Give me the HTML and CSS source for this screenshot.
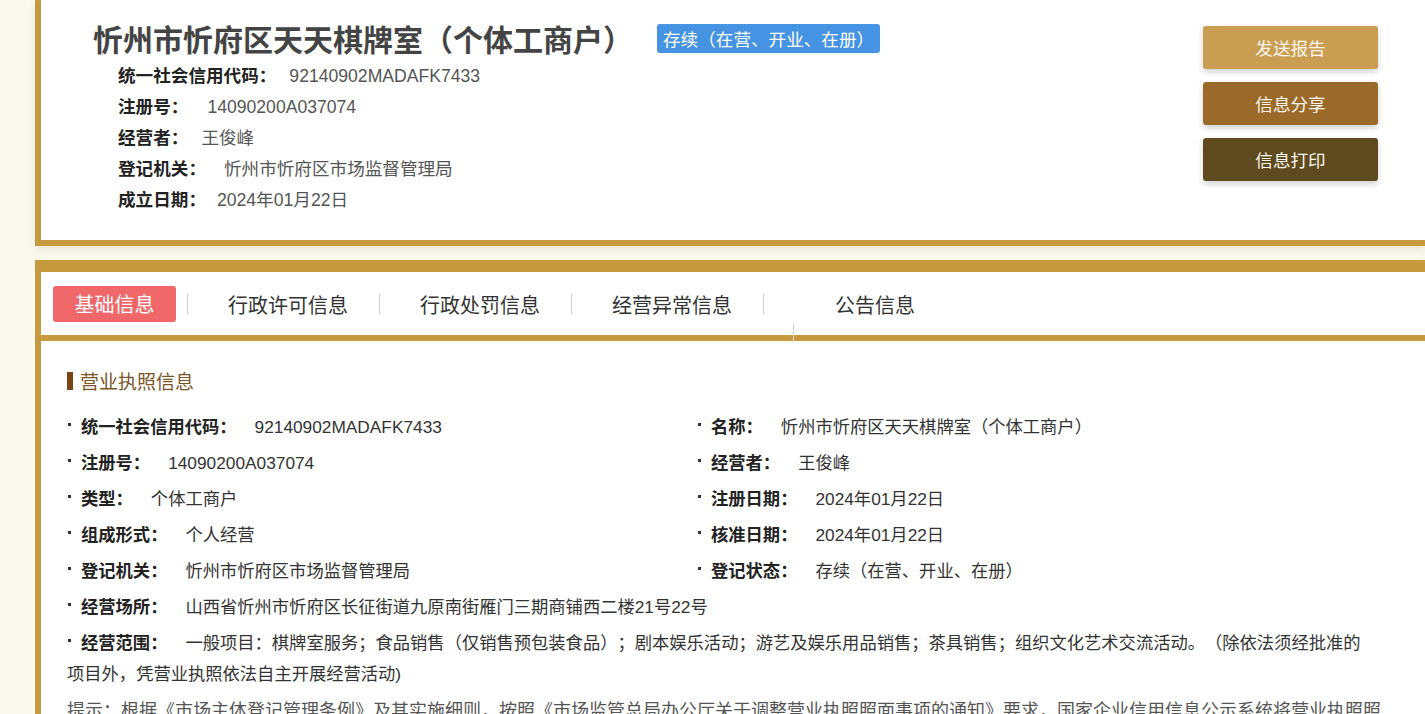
FILE: index.html
```html
<!DOCTYPE html>
<html lang="zh-CN">
<head>
<meta charset="utf-8">
<title>忻州市忻府区天天棋牌室（个体工商户）</title>
<link rel="stylesheet" href="styles.css">
</head>
<body>
<div class="page">
  <section class="head-card">
    <div class="head-main">
      <div class="title-row">
        <h1 class="title">忻州市忻府区天天棋牌室（个体工商户）</h1>
        <span class="status">存续（在营、开业、在册）</span>
      </div>
      <ul class="head-info">
        <li><span class="k">统一社会信用代码：</span><span class="v v-code">92140902MADAFK7433</span></li>
        <li><span class="k">注册号：</span><span class="v v-reg">14090200A037074</span></li>
        <li><span class="k">经营者：</span><span class="v v-op">王俊峰</span></li>
        <li><span class="k">登记机关：</span><span class="v v-org">忻州市忻府区市场监督管理局</span></li>
        <li><span class="k">成立日期：</span><span class="v v-date">2024年01月22日</span></li>
      </ul>
    </div>
    <div class="actions">
      <button class="btn btn-report">发送报告</button>
      <button class="btn btn-share">信息分享</button>
      <button class="btn btn-print">信息打印</button>
    </div>
  </section>

  <section class="detail-card">
    <nav class="tabs">
      <span class="tab tab-active">基础信息</span>
      <span class="tab">行政许可信息</span>
      <span class="tab">行政处罚信息</span>
      <span class="tab">经营异常信息</span>
      <span class="tab tab-last">公告信息</span>
    </nav>
    <div class="detail-body">
      <h2 class="sec-title">营业执照信息</h2>
      <div class="grid">
        <div class="item"><span class="k">统一社会信用代码：</span><span class="v">92140902MADAFK7433</span></div>
        <div class="item"><span class="k">名称：</span><span class="v">忻州市忻府区天天棋牌室（个体工商户）</span></div>
        <div class="item"><span class="k">注册号：</span><span class="v">14090200A037074</span></div>
        <div class="item"><span class="k">经营者：</span><span class="v">王俊峰</span></div>
        <div class="item"><span class="k">类型：</span><span class="v">个体工商户</span></div>
        <div class="item"><span class="k">注册日期：</span><span class="v">2024年01月22日</span></div>
        <div class="item"><span class="k">组成形式：</span><span class="v">个人经营</span></div>
        <div class="item"><span class="k">核准日期：</span><span class="v">2024年01月22日</span></div>
        <div class="item"><span class="k">登记机关：</span><span class="v">忻州市忻府区市场监督管理局</span></div>
        <div class="item"><span class="k">登记状态：</span><span class="v">存续（在营、开业、在册）</span></div>
        <div class="item item-full"><span class="k">经营场所：</span><span class="v">山西省忻州市忻府区长征街道九原南街雁门三期商铺西二楼21号22号</span></div>
        <div class="item item-full item-wrap"><span class="k">经营范围：</span><span class="v">一般项目：棋牌室服务；食品销售（仅销售预包装食品）；剧本娱乐活动；游艺及娱乐用品销售；茶具销售；组织文化艺术交流活动。（除依法须经批准的项目外，凭营业执照依法自主开展经营活动)</span></div>
      </div>
      <p class="tip">提示：根据《市场主体登记管理条例》及其实施细则，按照《市场监管总局办公厅关于调整营业执照照面事项的通知》要求，国家企业信用信息公示系统将营业执照照面公示信息中的“类型”调整为“市场主体类型”，相关信息以登记机关公示为准。</p>
    </div>
  </section>
</div>
</body>
</html>
```

FILE: styles.css
```css
* { box-sizing: border-box; }

html, body {
  margin: 0;
  padding: 0;
  background: #fbf8ee;
  font-family: "Liberation Sans", "Noto Sans CJK SC", "Microsoft YaHei", sans-serif;
  color: #333;
  overflow: hidden;
  text-spacing-trim: space-all;
}

.page {
  padding-left: 35px;
}

/* ---------- head card ---------- */
.head-card {
  display: flex;
  background: #fff;
  border-left: 6px solid #c89a3f;
  border-bottom: 6px solid #c89a3f;
  box-shadow: 0 4px 8px rgba(0, 0, 0, 0.08);
  padding: 18px 47px 24px 52px;
}

.head-main {
  flex: 1;
}

.title-row {
  display: flex;
  align-items: flex-start;
}

.title {
  margin: 0;
  font-family: "Noto Sans CJK SC", sans-serif;
  font-size: 30px;
  line-height: 40px;
  font-weight: 700;
  color: #444;
}

.status {
  margin-top: 6px;
  margin-left: 24px;
  background: #4593e2;
  color: #fff;
  font-family: "Noto Sans CJK SC", sans-serif;
  font-size: 17.6px;
  line-height: 29px;
  height: 29px;
  padding: 0 6px;
  border-radius: 3px;
}

.head-info {
  list-style: none;
  margin: 3px 0 0;
  padding: 0 0 0 25px;
}

.head-info li {
  display: flex;
  font-size: 17.6px;
  line-height: 31px;
}

.head-info .k {
  font-weight: 700;
  color: #222;
}

.head-info .v {
  color: #555;
}

.head-info .v-code { margin-left: 13px; }
.head-info .v-reg { margin-left: 19px; }
.head-info .v-op { margin-left: 13px; }
.head-info .v-org { margin-left: 18px; }
.head-info .v-date { margin-left: 11px; }

.actions {
  display: flex;
  flex-direction: column;
  gap: 13px;
  padding-top: 8px;
}

.btn {
  width: 175px;
  height: 43px;
  border: 0;
  border-radius: 3px;
  color: #fff8ea;
  font-family: "Noto Sans CJK SC", sans-serif;
  font-size: 17.6px;
  box-shadow: 0 3px 6px rgba(0, 0, 0, 0.18);
  cursor: pointer;
}

.btn-report { background: #c99d52; }
.btn-share { background: #9a6a2a; }
.btn-print { background: #5e4a1f; }

/* ---------- detail card ---------- */
.detail-card {
  margin-top: 14px;
  background: #fff;
  border-left: 6px solid #c89a3f;
  border-top: 12px solid #c89a3f;
}

.tabs {
  display: flex;
  align-items: stretch;
  height: 69px;
  padding-left: 12px;
  border-bottom: 6px solid #c89a3f;
}

.tab {
  position: relative;
  display: flex;
  align-items: center;
  font-family: "Noto Sans CJK SC", sans-serif;
  font-size: 20px;
  color: #333;
  padding: 1px 31px 0 41px;
}

.tab::before {
  content: "";
  position: absolute;
  left: 0;
  top: 22px;
  width: 1px;
  height: 20px;
  background: #d6d6d6;
}

.tab-active {
  align-self: center;
  height: 36px;
  margin-right: 11px;
  padding: 0 21.5px;
  background: #f0676a;
  color: #fff;
  border-radius: 3px;
}

.tab-active::before { display: none; }

.tab-last { padding-left: 72px; }

.tab-last::after {
  content: "";
  position: absolute;
  left: 30px;
  top: 51px;
  width: 1px;
  height: 19px;
  background: #d8d8d8;
}

.detail-body {
  padding: 27px 0 0 26px;
  width: 1344px;
}

.sec-title {
  display: flex;
  align-items: center;
  margin: 0 0 15px;
  font-family: "Noto Sans CJK SC", sans-serif;
  font-size: 19px;
  line-height: 26px;
  font-weight: 400;
  color: #7b5428;
}

.sec-title::before {
  content: "";
  width: 6px;
  height: 18px;
  background: #7a4512;
  margin-right: 7px;
}

.grid {
  display: grid;
  grid-template-columns: 630px 1fr;
}

.item {
  font-size: 17.3px;
  line-height: 36px;
  color: #333;
}

.item::before {
  content: "";
  display: inline-block;
  width: 3px;
  height: 3px;
  margin: 0 10px 0 1px;
  background: #333;
  vertical-align: 0.4em;
}

.item .k {
  font-weight: 700;
  color: #222;
  margin-right: 18px;
}

.item-full {
  grid-column: 1 / -1;
}

.item-wrap {
  line-height: 31px;
  padding-top: 3px;
  padding-right: 20px;
}

.tip {
  margin: 6px 0 0;
  font-size: 18px;
  line-height: 31px;
  color: #555;
}
```
